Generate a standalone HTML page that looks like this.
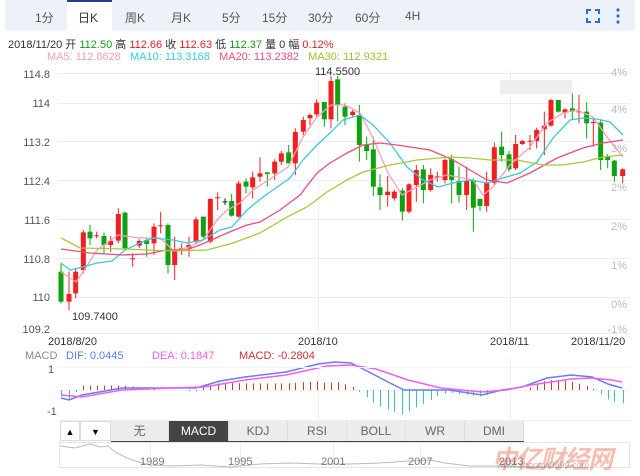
<!DOCTYPE html>
<html><head><meta charset="utf-8"><style>
*{margin:0;padding:0;box-sizing:border-box}
body{width:640px;height:475px;background:#fff;font-family:"Liberation Sans","Noto Sans CJK SC",sans-serif;overflow:hidden;position:relative}
.top{position:absolute;left:5px;top:0;width:630px;height:31px;background:#eef2f8}
.top span{position:absolute;top:9px;font-size:12px;color:#555}
.act{position:absolute;left:62px;top:0;width:45px;height:31px;background:#fff;border-top:2px solid #1f3f8f}
.abs{position:absolute;white-space:nowrap}
.tabs{position:absolute;top:421px;height:20px;font-size:12px;color:#666;text-align:center;line-height:20px;background:#ececec;border-right:1px solid #ddd}
</style></head><body>
<div class="top"><div class="act"></div>
<span style="left:30px">1分</span><span style="left:73px;color:#333">日K</span><span style="left:120px">周K</span><span style="left:166px">月K</span><span style="left:217px">5分</span><span style="left:257px">15分</span><span style="left:303px">30分</span><span style="left:350px">60分</span><span style="left:400px">4H</span>
<svg style="position:absolute;left:581px;top:9px" width="14" height="14"><path d="M1 5V1H5M9 1H13V5M13 9V13H9M5 13H1V9" fill="none" stroke="#2a6fd6" stroke-width="2"/></svg>
<svg style="position:absolute;left:611px;top:8px" width="4" height="16"><circle cx="2" cy="2" r="1.6" fill="#2a6fd6"/><circle cx="2" cy="8" r="1.6" fill="#2a6fd6"/><circle cx="2" cy="14" r="1.6" fill="#2a6fd6"/></svg>
</div>
<div class="abs" style="left:8px;top:36px;font-size:11px;color:#333">2018/11/20 开 <span style="color:#1a9a1a">112.50</span> 高 <span style="color:#e02020">112.66</span> 收 <span style="color:#e02020">112.63</span> 低 <span style="color:#1a9a1a">112.37</span> 量 0 幅 <span style="color:#e02020">0.12%</span></div>
<div class="abs" style="left:47px;top:51px;font-size:11px"><span style="color:#f5a0b8">MA5: 112.8628</span>&nbsp;&nbsp;&nbsp;<span style="color:#3cc8e0">MA10: 113.3168</span>&nbsp;&nbsp;&nbsp;<span style="color:#ee4c7c">MA20: 113.2382</span>&nbsp;&nbsp;&nbsp;<span style="color:#9cc030">MA30: 112.9321</span></div>
<svg id="s" class="abs" style="left:0;top:0" width="640" height="475" font-family="Liberation Sans, sans-serif"></svg>
<div class="tabs" style="left:60px;width:20px;background:#fff;border:1px solid #ddd;font-size:9px;color:#000">▲</div>
<div class="tabs" style="left:80px;width:31px;background:#fff;border:1px solid #ddd;font-size:9px;color:#000">▼</div>
<div class="tabs" style="left:111px;width:58px">无</div>
<div class="tabs" style="left:169px;width:60px;background:#444;color:#fff">MACD</div>
<div class="tabs" style="left:229px;width:59px">KDJ</div>
<div class="tabs" style="left:288px;width:59px">RSI</div>
<div class="tabs" style="left:347px;width:59px">BOLL</div>
<div class="tabs" style="left:406px;width:59px">WR</div>
<div class="tabs" style="left:465px;width:59px">DMI</div>
<div class="abs" style="left:492px;top:440px;font-size:25px;font-weight:bold;font-style:italic;color:rgba(235,90,60,0.4);letter-spacing:-1px">中亿财经网</div>
<div class="abs" style="left:497px;top:460px;font-size:9px;font-style:italic;color:rgba(120,120,120,0.5)">www.zhongyi9999.com</div>
<script>
var S='';
function L(x1,y1,x2,y2,c,w){S+='<line x1="'+x1+'" y1="'+y1+'" x2="'+x2+'" y2="'+y2+'" stroke="'+c+'" stroke-width="'+(w||1)+'"/>';}
function T(x,y,t,c,s,a){S+='<text x="'+x+'" y="'+y+'" fill="'+c+'" font-size="'+s+'"'+(a?' text-anchor="'+a+'"':'')+'>'+t+'</text>';}
var gy=[73,103,141,180,219,258,297,333];
gy.forEach(function(y){L(58,y+.5,630,y+.5,'#ececec');});
L(318.5,70,318.5,335,'#eee');L(510.5,70,510.5,335,'#eee');
L(318.5,358,318.5,420,'#eee');L(510.5,358,510.5,420,'#eee');
var pl=[['114.8',78],['114',107],['113.2',146],['112.4',185],['111.6',224],['110.8',263],['110',301],['109.2',333]];
pl.forEach(function(p){T(50,p[1],p[0],'#555',11,'end');});
var rl=[['4%',76],['4%',113],['3%',152],['2%',191],['2%',230],['1%',269],['0%',308],['-1%',333]];
rl.forEach(function(p){T(627,p[1],p[0],'#bbb',11,'end');});
S+='<rect x="500" y="80" width="72" height="14" fill="#eee"/>';
var A=[[63,'g',605,695,580,700],[87,'r',672,695,605,720],[107,'r',605,670,595,685],[130,'r',487,600,480,610],[150,'g',485,505,465,525],[170,'r',496,499,485,505],[192,'g',498,525,488,550],[212,'r',512,525,498,545],[235,'r',432,512,415,520],[255,'g',428,535,425,540],[278,'r',565,568,550,590],[298,'r',513,527,508,535],[320,'g',510,522,505,560],[342,'r',470,520,460,555],[362,'r',466,469,425,490],[384,'g',465,585,460,610],[404,'r',540,585,500,630],[425,'r',534,537,520,555],[447,'r',525,535,500,560],[468,'r',448,515,440,520],[490,'g',440,500,440,505],[511,'r',387,515,385,520],[533,'r',382,385,367,420],[555,'k',394,397,385,405],[575,'g',393,437,372,440],[596,'r',340,440,333,443],[618,'g',335,350,325,370],[638,'r',322,352,305,385],[660,'r',310,320,262,335],[682,'g',307,312,307,350],[704,'r',275,310,268,330],[724,'r',250,275,243,285],[746,'g',247,280,225,280],[766,'r',186,280,175,315],[790,'r',150,185,140,195],[810,'r',135,145,130,165],[830,'r',98,133,88,140],[853,'g',96,148,96,170],[873,'r',33,148,18,175],[893,'g',28,105,18,155]];
var B=[[45,'g',110,140,100,165],[68,'r',125,135,120,140],[88,'g',138,225,105,275],[110,'g',225,243,200,270],[130,'g',238,350,200,378],[150,'g',352,375,313,420],[173,'r',365,375,318,410],[193,'r',365,385,360,392],[217,'g',362,425,355,452],[237,'r',343,425,340,430],[259,'r',300,345,285,395],[280,'g',298,360,285,400],[302,'r',315,360,295,365],[322,'r',319,322,305,335],[345,'r',270,330,265,340],[365,'g',267,330,255,400],[387,'g',333,375,290,398],[410,'r',333,375,290,420],[430,'g',330,413,325,485],[450,'g',387,408,385,423],[470,'r',338,408,305,425],[493,'r',232,338,218,345],[515,'g',230,255,185,275],[537,'g',253,298,243,305],[557,'r',222,295,195,300],[577,'r',213,222,210,225],[600,'r',212,215,195,240],[620,'r',180,213,173,235],[643,'r',167,178,125,255],[663,'r',90,167,87,170],[685,'g',90,125,90,128],[705,'r',118,128,115,145],[727,'g',115,125,70,150],[747,'r',124,127,75,160],[770,'g',125,160,97,205],[790,'r',156,159,145,230],[812,'g',158,270,150,300],[833,'g',260,270,253,295],[853,'g',272,318,270,335],[878,'r',298,318,295,340]];
var C=[];
A.forEach(function(a){C.push([40+a[0]/3,a[1],70+a[2]/3,70+a[3]/3,70+a[4]/3,70+a[5]/3]);});
B.forEach(function(a){C.push([330+a[0]/3,a[1],70+a[2]/3,70+a[3]/3,70+a[4]/3,70+a[5]/3]);});
var col={r:'#f02020',g:'#11a011',k:'#222'};
C.forEach(function(c){var cl=col[c[1]];L(c[0],c[4],c[0],c[5],cl);S+='<rect x="'+(c[0]-2.5)+'" y="'+c[2]+'" width="5" height="'+Math.max(1,c[3]-c[2])+'" fill="'+cl+'"/>';});
function P(pts,c,w){S+='<polyline fill="none" stroke="'+c+'" stroke-width="'+(w||1.3)+'" points="'+pts+'"/>';}
P('61,272 76,282 83,272 97,250 118,235 140,238 160,238 173,250 187,248 203,240 217,220 227,210 240,203 253,190 273,177 288,167 303,137 317,117 331,105 345,105 360,113 373,138 388,173 402,195 417,187 430,180 447,175 463,178 473,180 483,195 493,187 510,165 530,147 547,123 563,113 577,110 593,117 607,137 623,157','#f5a0b8');
P('61,263 70,270 83,267 97,263 112,261 125,250 140,243 153,238 173,240 187,243 203,240 220,230 232,227 247,210 263,197 280,185 290,178 303,160 317,145 330,133 343,120 360,115 373,125 390,143 407,167 423,180 438,187 453,183 470,180 487,183 503,178 520,173 537,162 553,138 570,120 583,118 597,119 610,122 623,135','#3cc8e0');
P('61,249 90,253 123,255 147,254 167,250 187,250 207,242 227,233 247,225 260,222 280,210 300,195 317,173 330,163 347,153 363,145 380,143 397,145 430,150 453,160 470,170 487,180 507,183 530,173 557,158 583,148 603,143 623,140','#ee4c7c');
P('61,238 80,248 123,249 173,251 207,250 233,243 260,233 287,217 307,207 327,192 347,180 363,172 390,165 417,160 450,157 470,158 490,160 517,160 543,165 563,165 583,162 603,157 623,155','#a8c83c');
T(315,75,'114.5500','#333',11);T(72,320,'109.7400','#333',11);
T(48,345,'2018/8/20','#333',11);T(298,345,'2018/10','#333',11);T(490,345,'2018/11','#333',11);T(571,345,'2018/11/20','#333',11);
T(25,359,'MACD','#888',11);T(66,359,'DIF: 0.0445','#5a7cf0',11);T(152,359,'DEA: 0.1847','#ee60ee',11);T(239,359,'MACD: -0.2804','#d03030',11);
T(48,373,'1','#555',11);T(47,415,'-1','#555',11);
var DIF=[[61,398],[69,400],[82,395],[122,388],[163,388],[196,388],[220,381],[245,377],[286,372],[318,364],[335,362],[351,363],[367,371],[388,382],[404,390],[449,390],[482,395],[502,390],[522,387],[547,378],[571,375],[592,377],[608,384],[622,388]];
var DEA=[[61,395],[82,397],[122,390],[171,388],[204,387],[245,380],[286,375],[327,366],[351,365],[376,369],[408,380],[441,388],[482,392],[506,390],[531,385],[571,379],[592,378],[612,380],[622,382]];
function I(a,x){for(var i=1;i<a.length;i++){if(x<=a[i][0]){var t=(x-a[i-1][0])/(a[i][0]-a[i-1][0]);return a[i-1][1]+t*(a[i][1]-a[i-1][1]);}}return a[a.length-1][1];}
L(58,390.5,630,390.5,'#f2f2f2');
C.forEach(function(c){var h=(I(DEA,c[0])-I(DIF,c[0]))*2.2;var x=Math.round(c[0])+.5;if(Math.abs(h)<1)return;L(x,390,x,390-h,h>0?'#d23a2a':'#3cc79a');});
P(DIF.join(' '),'#6a7cf0',1.5);P(DEA.join(' '),'#ee60ee',1.5);
L(58,367.5,630,367.5,'#f2f2f2');L(58,420.5,630,420.5,'#eee');
L(111,441.5,524,441.5,'#444',2);
S+='<rect x="59.5" y="442.5" width="570" height="25" fill="none" stroke="#e4e4e4"/>';
[150,240,333,420,509].forEach(function(x){L(x+.5,443,x+.5,467,'#eee');});
P('60,446 75,448 90,444 100,447 108,446 115,452 125,457 135,461 150,465 170,466 200,465 230,467 260,464 290,463 320,464 350,464 380,463 410,461 430,460 445,463 470,466 500,466 530,467 560,467','#bbb',1);
T(140,465,'1989','#777',11);T(228,465,'1995','#777',11);T(321,465,'2001','#777',11);T(408,465,'2007','#777',11);T(499,465,'2013','#777',11);
document.getElementById('s').innerHTML=S;
</script>
</body></html>
